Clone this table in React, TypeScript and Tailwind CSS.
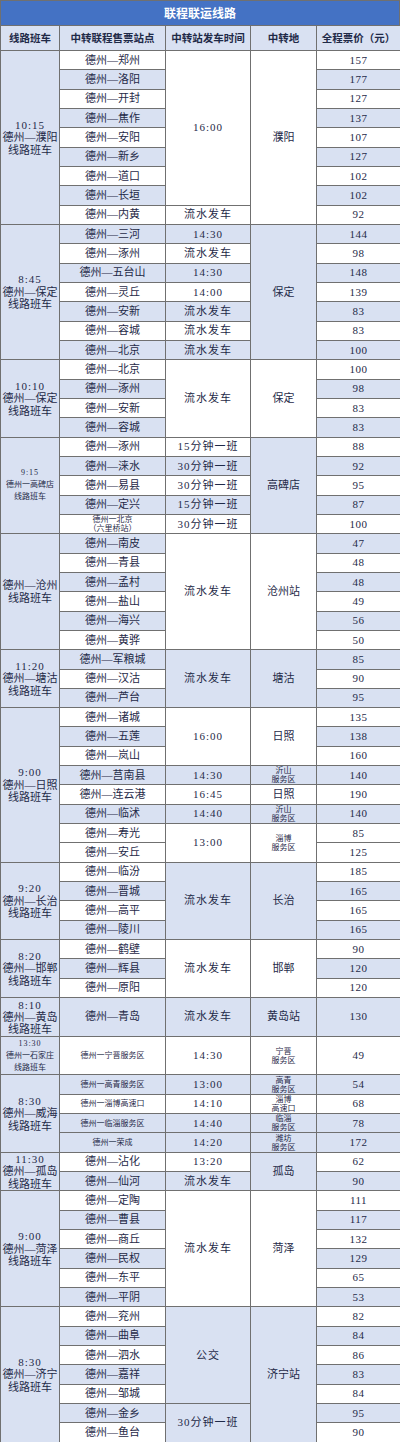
import React from "react";

type Txt = string | string[];
type Span = { t: Txt; n?: number; b: boolean; s?: boolean };
type Row = { st: Txt; ss?: boolean; p: string; b: boolean; time?: Span; place?: Span };
type Group = { label: string[]; ls?: boolean; tall?: boolean; rows: Row[] };

const r = (st: Txt, p: string, b: boolean, time?: Span, place?: Span, ss?: boolean): Row => ({
  st,
  p,
  b,
  time,
  place,
  ss,
});

const groups: Group[] = [
  {
    label: ["10:15", "德州—濮阳", "线路班车"],
    rows: [
      r("德州—郑州", "157", false, { t: "16:00", n: 8, b: false }, { t: "濮阳", n: 9, b: false }),
      r("德州—洛阳", "177", true),
      r("德州—开封", "127", false),
      r("德州—焦作", "137", true),
      r("德州—安阳", "107", false),
      r("德州—新乡", "127", true),
      r("德州—道口", "102", false),
      r("德州—长垣", "102", true),
      r("德州—内黄", "92", false, { t: "流水发车", b: false }),
    ],
  },
  {
    label: ["8:45", "德州—保定", "线路班车"],
    rows: [
      r("德州—三河", "144", true, { t: "14:30", b: true }, { t: "保定", n: 7, b: true }),
      r("德州—涿州", "98", false, { t: "流水发车", b: false }),
      r("德州—五台山", "148", true, { t: "14:30", b: true }),
      r("德州—灵丘", "139", false, { t: "14:00", b: false }),
      r("德州—安新", "83", true, { t: "流水发车", b: true }),
      r("德州—容城", "83", false, { t: "流水发车", b: false }),
      r("德州—北京", "100", true, { t: "流水发车", b: true }),
    ],
  },
  {
    label: ["10:10", "德州—保定", "线路班车"],
    rows: [
      r("德州—北京", "100", false, { t: "流水发车", n: 4, b: false }, { t: "保定", n: 4, b: false }),
      r("德州—涿州", "98", true),
      r("德州—安新", "83", false),
      r("德州—容城", "83", true),
    ],
  },
  {
    label: ["9:15", "德州一高碑店", "线路班车"],
    ls: true,
    rows: [
      r("德州—涿州", "88", false, { t: "15分钟一班", b: false }, { t: "高碑店", n: 5, b: true }),
      r("德州—涞水", "92", true, { t: "30分钟一班", b: true }),
      r("德州—易县", "95", false, { t: "30分钟一班", b: false }),
      r("德州—定兴", "87", true, { t: "15分钟一班", b: true }),
      r(["德州一北京", "（六里桥站）"], "100", false, { t: "30分钟一班", b: false }, undefined, true),
    ],
  },
  {
    label: ["德州—沧州", "线路班车"],
    rows: [
      r("德州—南皮", "47", true, { t: "流水发车", n: 6, b: false }, { t: "沧州站", n: 6, b: false }),
      r("德州—青县", "48", false),
      r("德州—孟村", "48", true),
      r("德州—盐山", "49", false),
      r("德州—海兴", "56", true),
      r("德州—黄骅", "50", false),
    ],
  },
  {
    label: ["11:20", "德州—塘沽", "线路班车"],
    rows: [
      r("德州—军粮城", "85", true, { t: "流水发车", n: 3, b: true }, { t: "塘沽", n: 3, b: true }),
      r("德州—汉沽", "90", false),
      r("德州—芦台", "95", true),
    ],
  },
  {
    label: ["9:00", "德州—日照", "线路班车"],
    rows: [
      r("德州—诸城", "135", false, { t: "16:00", n: 3, b: false }, { t: "日照", n: 3, b: false }),
      r("德州—五莲", "138", true),
      r("德州—岚山", "160", false),
      r("德州—莒南县", "140", true, { t: "14:30", b: true }, { t: ["沂山", "服务区"], b: true, s: true }),
      r("德州—连云港", "190", false, { t: "16:45", b: false }, { t: "日照", b: false }),
      r("德州—临沭", "140", true, { t: "14:40", b: true }, { t: ["沂山", "服务区"], b: true, s: true }),
      r("德州—寿光", "85", false, { t: "13:00", n: 2, b: false }, { t: ["淄博", "服务区"], n: 2, b: false, s: true }),
      r("德州—安丘", "125", false),
    ],
  },
  {
    label: ["9:20", "德州—长治", "线路班车"],
    rows: [
      r("德州—临汾", "185", false, { t: "流水发车", n: 4, b: true }, { t: "长治", n: 4, b: true }),
      r("德州—晋城", "165", true),
      r("德州—高平", "165", false),
      r("德州—陵川", "165", true),
    ],
  },
  {
    label: ["8:20", "德州—邯郸", "线路班车"],
    rows: [
      r("德州—鹤壁", "90", false, { t: "流水发车", n: 3, b: false }, { t: "邯郸", n: 3, b: false }),
      r("德州—辉县", "120", true),
      r("德州—原阳", "120", false),
    ],
  },
  {
    label: ["8:10", "德州—黄岛", "线路班车"],
    tall: true,
    rows: [r("德州—青岛", "130", true, { t: "流水发车", b: true }, { t: "黄岛站", b: true })],
  },
  {
    label: ["13:30", "德州一石家庄", "线路班车"],
    ls: true,
    tall: true,
    rows: [
      r("德州一宁晋服务区", "49", false, { t: "14:30", b: false }, { t: ["宁晋", "服务区"], b: false, s: true }, true),
    ],
  },
  {
    label: ["8:30", "德州—威海", "线路班车"],
    rows: [
      r("德州一高青服务区", "54", true, { t: "13:00", b: true }, { t: ["高青", "服务区"], b: true, s: true }, true),
      r("德州一淄博高速口", "68", false, { t: "14:10", b: false }, { t: ["淄博", "高速口"], b: false, s: true }, true),
      r("德州一临淄服务区", "78", true, { t: "14:40", b: true }, { t: ["临淄", "服务区"], b: true, s: true }, true),
      r("德州一荣成", "172", true, { t: "14:20", b: true }, { t: ["潍坊", "服务区"], b: true, s: true }, true),
    ],
  },
  {
    label: ["11:30", "德州—孤岛", "线路班车"],
    rows: [
      r("德州—沾化", "62", false, { t: "13:20", b: false }, { t: "孤岛", n: 2, b: true }),
      r("德州—仙河", "90", true, { t: "流水发车", b: true }),
    ],
  },
  {
    label: ["9:00", "德州—菏泽", "线路班车"],
    rows: [
      r("德州—定陶", "111", false, { t: "流水发车", n: 6, b: false }, { t: "菏泽", n: 6, b: false }),
      r("德州—曹县", "117", true),
      r("德州—商丘", "132", false),
      r("德州—民权", "129", true),
      r("德州—东平", "65", false),
      r("德州—平阴", "53", true),
    ],
  },
  {
    label: ["8:30", "德州—济宁", "线路班车"],
    rows: [
      r("德州—兖州", "82", false, { t: "公交", n: 5, b: true }, { t: "济宁站", n: 7, b: true }),
      r("德州—曲阜", "84", true),
      r("德州—泗水", "86", false),
      r("德州—嘉祥", "83", true),
      r("德州—邹城", "84", false),
      r("德州—金乡", "95", true, { t: "30分钟一班", n: 2, b: true }),
      r("德州—鱼台", "90", false),
    ],
  },
];

const cellBase = "border border-[#707070] p-0 text-center align-middle";
const bg = (b: boolean) => (b ? "bg-[#d9e1f2]" : "bg-white");

function Lines({ t, small }: { t: Txt; small?: boolean }) {
  const list = Array.isArray(t) ? t : [t];
  return (
    <div className={small ? "text-[8px] leading-[9px]" : "text-[11px] leading-[13px]"}>
      {list.map((l, i) => (
        <div key={i} className="whitespace-nowrap">
          {l}
        </div>
      ))}
    </div>
  );
}

const headers = ["线路班车", "中转联程售票站点", "中转站发车时间", "中转地", "全程票价（元）"];

export default function App() {
  return (
    <div className="w-[400px] bg-white font-['Liberation_Serif','Noto_Sans_CJK_SC',serif] text-[#1f2a48]">
      <div className="flex h-[25px] items-center justify-center border-x border-t border-[#707070] bg-[#4472c4] font-['Noto_Sans_CJK_SC',sans-serif] text-[12px] font-bold text-white">
        联程联运线路
      </div>
      <table className="w-[400px] table-fixed border-collapse">
        <colgroup>
          <col className="w-[59px]" />
          <col className="w-[106px]" />
          <col className="w-[85px]" />
          <col className="w-[66px]" />
          <col className="w-[84px]" />
        </colgroup>
        <thead>
          <tr className="h-[25px]">
            {headers.map((h) => (
              <th
                key={h}
                className={`${cellBase} bg-[#d9e1f2] font-['Noto_Sans_CJK_SC',sans-serif] text-[10.5px] font-bold whitespace-nowrap`}
              >
                {h}
              </th>
            ))}
          </tr>
        </thead>
        <tbody>
          {groups.map((g, gi) =>
            g.rows.map((row, i) => (
              <tr key={`${gi}-${i}`} className={g.tall ? "h-[38.66px]" : "h-[19.33px]"}>
                {i === 0 && (
                  <td rowSpan={g.rows.length} className={`${cellBase} bg-[#d9e1f2]`}>
                    <div
                      className={
                        g.ls
                          ? "text-[8px] leading-[12px]"
                          : g.tall
                            ? "text-[11px] leading-[12px]"
                            : "text-[11px] leading-[12.5px]"
                      }
                    >
                      {g.label.map((l, k) => (
                        <div key={k} className={k === 0 && !l.startsWith("德") ? "tracking-[1px]" : "whitespace-nowrap"}>
                          {l}
                        </div>
                      ))}
                    </div>
                  </td>
                )}
                <td className={`${cellBase} ${bg(row.b)}`}>
                  <Lines t={row.st} small={row.ss} />
                </td>
                {row.time && (
                  <td rowSpan={row.time.n ?? 1} className={`${cellBase} ${bg(row.time.b)}`}>
                    <div className="text-[11px] leading-[13px] tracking-[1px] whitespace-nowrap">{row.time.t}</div>
                  </td>
                )}
                {row.place && (
                  <td rowSpan={row.place.n ?? 1} className={`${cellBase} ${bg(row.place.b)}`}>
                    <Lines t={row.place.t} small={row.place.s} />
                  </td>
                )}
                <td className={`${cellBase} ${bg(row.b)}`}>
                  <div className="text-[11px] leading-[13px] tracking-[0.5px]">{row.p}</div>
                </td>
              </tr>
            ))
          )}
        </tbody>
      </table>
    </div>
  );
}
